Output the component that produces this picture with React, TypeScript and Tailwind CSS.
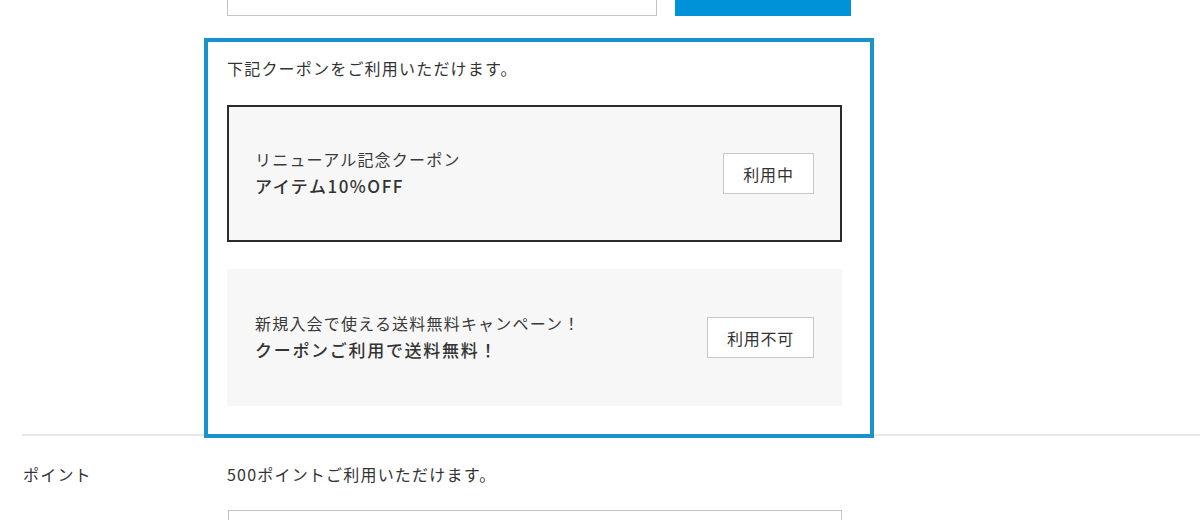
export default function App() {
  const font = "font-['Noto_Sans_CJK_JP','Noto_Sans',sans-serif]";
  return (
    <div className={`w-[1200px] h-[520px] overflow-hidden bg-white text-[#333] ${font}`}>
      <div className="pl-[22px]">
        {/* Coupon row */}
        <div className="flex border-b-2 border-[#e8e8e8]">
          <div className="w-[205px] shrink-0" />
          <div className="flex flex-col">
            <div className="-mt-[30px] flex gap-[18px]">
              <div className="w-[430px] h-[46px] border border-[#c4c4c4] bg-white" />
              <div className="w-[176px] h-[46px] bg-[#0092d8]" />
            </div>
            <div className="relative z-10 mt-[22px] -ml-[23px] -mb-[4px] w-[670px] border-4 border-[#1a93cc] bg-white pl-[19px] pr-[28px] pt-[14px] pb-[28px]">
              <p className="text-[16px] leading-6 tracking-[0.075em] mb-[25px]">
                下記クーポンをご利用いただけます。
              </p>
              <div className="flex flex-col gap-[27px]">
                <div className="flex h-[137px] items-center justify-between border-2 border-[#2b2b2b] bg-[#f7f7f7] px-[26px]">
                  <div className="flex flex-col -mt-[2px]">
                    <span className="text-[16px] leading-[26px] tracking-[0.075em] text-[#3a3a3a]">
                      リニューアル記念クーポン
                    </span>
                    <span className="text-[17px] leading-[28px] tracking-[0.09em] font-medium text-[#333]">
                      アイテム10%OFF
                    </span>
                  </div>
                  <div className="flex h-[41px] w-[91px] items-center justify-center border border-[#c8c8c8] bg-white text-[16px] tracking-[0.05em]">
                    利用中
                  </div>
                </div>
                <div className="flex h-[137px] items-center justify-between border-2 border-transparent bg-[#f7f7f7] px-[26px]">
                  <div className="flex flex-col -mt-[2px]">
                    <span className="text-[16px] leading-[26px] tracking-[0.075em] text-[#3a3a3a]">
                      新規入会で使える送料無料キャンペーン！
                    </span>
                    <span className="text-[17px] leading-[28px] tracking-[0.1em] font-medium text-[#333]">
                      クーポンご利用で送料無料！
                    </span>
                  </div>
                  <div className="flex h-[41px] w-[107px] items-center justify-center border border-[#c8c8c8] bg-white text-[16px] tracking-[0.05em]">
                    利用不可
                  </div>
                </div>
              </div>
            </div>
          </div>
        </div>
        {/* Point row */}
        <div className="flex pt-[26px]">
          <div className="w-[205px] shrink-0 pl-[1px] text-[16px] leading-6 tracking-[0.075em]">
            ポイント
          </div>
          <div className="flex flex-col">
            <p className="text-[16px] leading-6 tracking-[0.075em]">
              500ポイントご利用いただけます。
            </p>
            <div className="mt-[24px] ml-px w-[614px] h-[46px] border border-[#c4c4c4] bg-white" />
          </div>
        </div>
      </div>
    </div>
  );
}
